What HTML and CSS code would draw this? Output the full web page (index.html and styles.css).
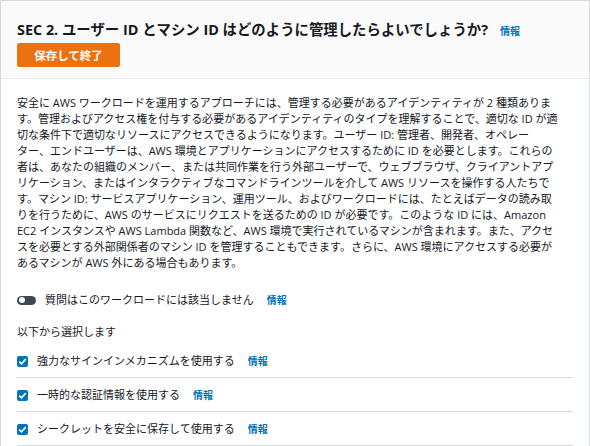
FILE: index.html
```html
<!DOCTYPE html>
<html lang="ja">
<head>
<meta charset="utf-8">
<link rel="stylesheet" href="styles.css">
</head>
<body>
<div class="panel">
  <div class="header">
    <h2 class="title">SEC 2. ユーザー ID とマシン ID はどのように管理したらよいでしょうか?<a class="info info-title">情報</a></h2>
    <button class="primary">保存して終了</button>
  </div>
  <div class="body">
    <p class="desc">安全に AWS ワークロードを運用するアプローチには、管理する必要があるアイデンティティが 2 種類ありま<br>す。管理およびアクセス権を付与する必要があるアイデンティティのタイプを理解することで、適切な ID が適<br>切な条件下で適切なリソースにアクセスできるようになります。ユーザー ID: 管理者、開発者、オペレー<br>ター、エンドユーザーは、AWS 環境とアプリケーションにアクセスするために ID を必要とします。これらの<br>者は、あなたの組織のメンバー、または共同作業を行う外部ユーザーで、ウェブブラウザ、クライアントアプ<br>リケーション、またはインタラクティブなコマンドラインツールを介して AWS リソースを操作する人たちで<br>す。マシン ID: サービスアプリケーション、運用ツール、およびワークロードには、たとえばデータの読み取<br>りを行うために、AWS のサービスにリクエストを送るための ID が必要です。このような ID には、Amazon<br>EC2 インスタンスや AWS Lambda 関数など、AWS 環境で実行されているマシンが含まれます。また、アクセ<br>スを必要とする外部関係者のマシン ID を管理することもできます。さらに、AWS 環境にアクセスする必要が<br>あるマシンが AWS 外にある場合もあります。</p>
    <div class="toggle-row">
      <span class="toggle"><span class="knob"></span></span>
      <span class="toggle-label">質問はこのワークロードには該当しません</span>
      <a class="info">情報</a>
    </div>
    <div class="select-label">以下から選択します</div>
    <ul class="choices">
      <li class="choice">
        <span class="checkbox"><svg viewBox="0 0 11 11" width="11" height="11"><path d="M2.3 5.6 L4.5 7.8 L8.8 3.2" fill="none" stroke="#fff" stroke-width="1.7"/></svg></span>
        <span class="choice-label">強力なサインインメカニズムを使用する</span>
        <a class="info">情報</a>
      </li>
      <li class="choice">
        <span class="checkbox"><svg viewBox="0 0 11 11" width="11" height="11"><path d="M2.3 5.6 L4.5 7.8 L8.8 3.2" fill="none" stroke="#fff" stroke-width="1.7"/></svg></span>
        <span class="choice-label">一時的な認証情報を使用する</span>
        <a class="info">情報</a>
      </li>
      <li class="choice">
        <span class="checkbox"><svg viewBox="0 0 11 11" width="11" height="11"><path d="M2.3 5.6 L4.5 7.8 L8.8 3.2" fill="none" stroke="#fff" stroke-width="1.7"/></svg></span>
        <span class="choice-label">シークレットを安全に保存して使用する</span>
        <a class="info">情報</a>
      </li>
    </ul>
  </div>
</div>
</body>
</html>
```

FILE: styles.css
```css
* { box-sizing: border-box; }
html, body { margin: 0; padding: 0; background: #fff; }
body {
  font-family: "Open Sans", "Noto Sans CJK JP", sans-serif;
  color: #16191f;
  font-size: 11px;
  line-height: 16px;
  width: 590px;
  height: 446px;
  overflow: hidden;
}
.panel {
  border: 1px solid #d5dbdb;
  border-bottom: none;
  width: 590px;
  min-height: 460px;
}
.header {
  background: #fafafa;
  border-bottom: 1px solid #eaeded;
  padding: 19px 16px 11px;
}
.title {
  margin: 0;
  font-size: 14.4px;
  line-height: 20px;
  font-weight: 700;
  color: #16191f;
}
.info {
  color: #0073bb;
  font-size: 10px;
  font-weight: 700;
  text-decoration: none;
}
.info-title { margin-left: 12px; }
.primary {
  display: block;
  margin-top: 2px;
  width: 103px;
  height: 24px;
  background: #ec7211;
  border: 1px solid #ec7211;
  border-radius: 2px;
  color: #fff;
  font-family: inherit;
  font-size: 11.5px;
  font-weight: 700;
  padding: 0;
}
.body { padding: 16px 16px 0; }
.desc { margin: 0; white-space: nowrap; }
.toggle-row {
  display: flex;
  align-items: center;
  margin-top: 21px;
}
.toggle {
  width: 19px;
  height: 9px;
  border-radius: 5px;
  background: #414750;
  display: flex;
  align-items: center;
  padding-left: 2px;
}
.knob {
  width: 6px;
  height: 6px;
  border-radius: 50%;
  background: #fff;
}
.toggle-label { margin-left: 9px; margin-right: 13px; }
.select-label { margin-top: 16px; }
.choices {
  list-style: none;
  margin: 4px 0 0;
  padding: 0;
}
.choice {
  display: flex;
  align-items: center;
  padding: 9px 0 8px;
  border-bottom: 1px solid #d5dbdb;
}
.checkbox {
  width: 11px;
  height: 11px;
  border-radius: 2px;
  background: #0073bb;
  display: flex;
}
.choice-label { margin-left: 9px; margin-right: 13px; }
```
